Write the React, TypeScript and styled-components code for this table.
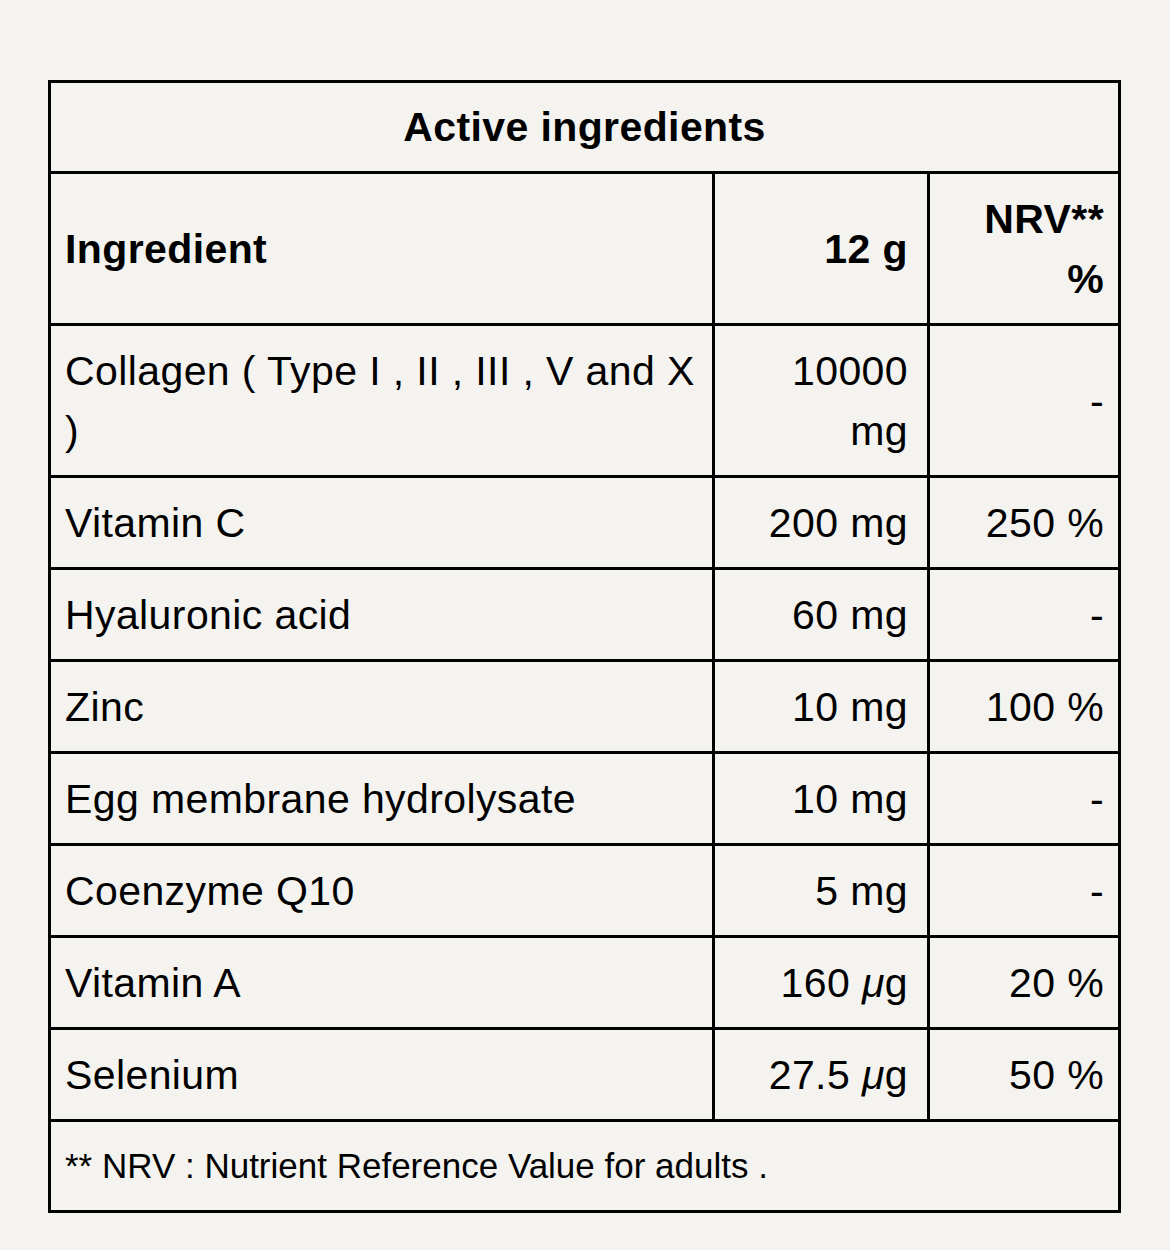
import { Fragment } from "react";
import styled, { createGlobalStyle } from "styled-components";

const GlobalStyle = createGlobalStyle`
  html, body {
    margin: 0;
    padding: 0;
    background: #f4f3ef;
  }
  body {
    font-family: "Liberation Sans", Arial, Helvetica, sans-serif;
    color: #000000;
  }
`;

const Page = styled.div`
  padding: 80px 49px 38px 48px;
`;

const Table = styled.div`
  width: 1073px;
  display: grid;
  grid-template-columns: 664px 215px 191px;
  border-left: 3px solid #000000;
  border-top: 3px solid #000000;
  box-sizing: border-box;
`;

type Align = "left" | "center" | "right";

interface ICell {
  $align?: Align;
  $span?: number;
  $bold?: boolean;
  $pr?: number;
  $h?: number;
}

const justify = { left: "flex-start", center: "center", right: "flex-end" };

const Cell = styled.div<ICell>`
  grid-column: span ${(p) => p.$span ?? 1};
  display: flex;
  align-items: center;
  justify-content: ${(p) => justify[p.$align ?? "left"]};
  text-align: ${(p) => p.$align ?? "left"};
  min-height: ${(p) => p.$h ?? 89}px;
  box-sizing: border-box;
  padding: 15px ${(p) => p.$pr ?? 14}px 14px 14px;
  border-right: 3px solid #000000;
  border-bottom: 3px solid #000000;

  font-size: 41px;
  line-height: 60px;
  letter-spacing: 0.4px;
  font-weight: ${(p) => (p.$bold ? 700 : 400)};
`;

const Title = styled(Cell)`
  padding-top: 14px;
  min-height: 88px;
`;

const Footnote = styled(Cell)`
  font-size: 35px;
  letter-spacing: 0;
  min-height: 88px;
  padding-top: 14px;
`;

const Text = styled.span``;

const Mu = styled.span`
  font-style: italic;
`;

interface IRow {
  name: string;
  amount: React.ReactNode;
  nrv: string;
  h?: number;
}

const ug = (n: string) => (
  <>
    {`${n} `}
    <Mu>μ</Mu>g
  </>
);

const rows: IRow[] = [
  {
    name: "Collagen ( Type I , II , III , V and X )",
    amount: "10000 mg",
    nrv: "-",
    h: 149,
  },
  { name: "Vitamin C", amount: "200 mg", nrv: "250 %" },
  { name: "Hyaluronic acid", amount: "60 mg", nrv: "-" },
  { name: "Zinc", amount: "10 mg", nrv: "100 %" },
  { name: "Egg membrane hydrolysate", amount: "10 mg", nrv: "-" },
  { name: "Coenzyme Q10", amount: "5 mg", nrv: "-" },
  { name: "Vitamin A", amount: ug("160"), nrv: "20 %", h: 88 },
  { name: "Selenium", amount: ug("27.5"), nrv: "50 %" },
];

export default function App() {
  return (
    <>
      <GlobalStyle />
      <Page>
        <Table>
          <Title $span={3} $align="center" $bold>
            <Text>Active ingredients</Text>
          </Title>

          <Cell $bold $h={149}>
            <Text>Ingredient</Text>
          </Cell>
          <Cell $bold $align="right" $pr={19} $h={149}>
            <Text>12 g</Text>
          </Cell>
          <Cell $bold $align="right" $h={149}>
            <Text>
              NRV**
              <br />%
            </Text>
          </Cell>

          {rows.map((r) => (
            <Fragment key={r.name}>
              <Cell $h={r.h}>
                <Text>{r.name}</Text>
              </Cell>
              <Cell $align="right" $pr={19} $h={r.h}>
                <Text>{r.amount}</Text>
              </Cell>
              <Cell $align="right" $h={r.h}>
                <Text>{r.nrv}</Text>
              </Cell>
            </Fragment>
          ))}

          <Footnote $span={3}>
            <Text>** NRV : Nutrient Reference Value for adults .</Text>
          </Footnote>
        </Table>
      </Page>
    </>
  );
}
